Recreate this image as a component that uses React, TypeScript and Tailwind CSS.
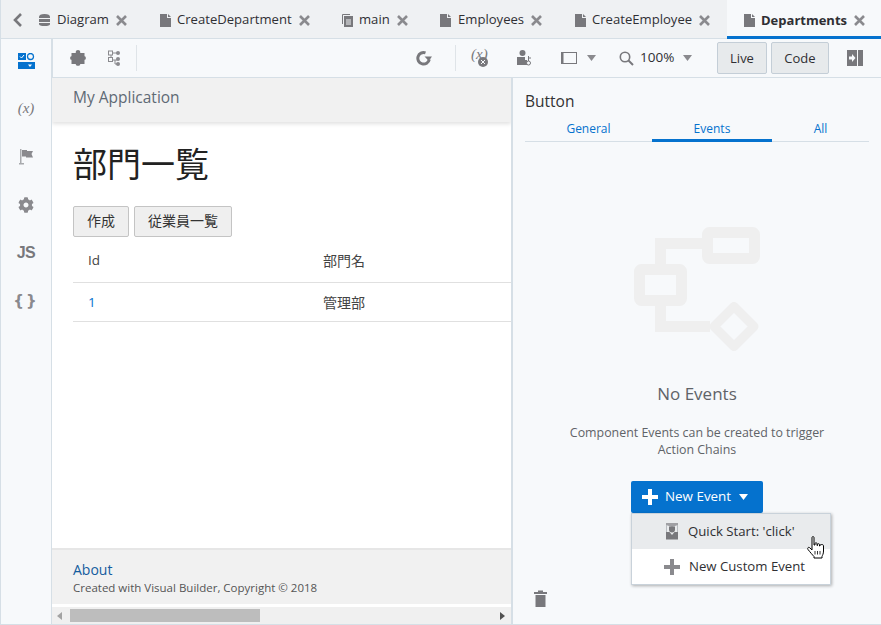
import React from "react";
import { FaCog } from "react-icons/fa";

const sans = "font-['Open_Sans','Noto_Sans','Noto_Sans_CJK_JP',sans-serif]";

function DocIcon() {
  return (
    <svg width="11" height="13" viewBox="0 0 11 13" className="shrink-0">
      <path d="M0 0H7V4H11V13H0Z" fill="#78787c" />
      <path d="M8 0L11 3H8Z" fill="#78787c" />
    </svg>
  );
}
function DbIcon() {
  return (
    <svg width="11" height="12" viewBox="0 0 11 12" className="shrink-0">
      <path d="M0 3Q0 0 5.500 0T11 3V4H0Z" fill="#78787c" />
      <rect y="5" width="11" height="3" fill="#78787c" />
      <path d="M0 9H11V10Q11 12 5.500 12T0 10Z" fill="#78787c" />
    </svg>
  );
}
function PagesIcon() {
  return (
    <svg width="11" height="13" viewBox="0 0 11 13" className="shrink-0">
      <path d="M0.500 10V0.500H8" fill="none" stroke="#78787c" />
      <rect x="2" y="2" width="9" height="11" fill="#78787c" />
      <path d="M4 6H9M4 8H9M4 10H9" stroke="#eff1f3" />
    </svg>
  );
}
function X() {
  return (
    <svg width="11" height="11" viewBox="0 0 11 11" className="ml-[7px] shrink-0">
      <path d="M1 1L10 10M10 1L1 10" stroke="#8a8a8e" strokeWidth="2.600" />
    </svg>
  );
}
function Caret({ color = "#8a8a8e" }: { color?: string }) {
  return (
    <svg width="9" height="6" viewBox="0 0 9 6" className="shrink-0">
      <path d="M0 0H9L4.500 6Z" fill={color} />
    </svg>
  );
}

function Tab({ icon, label, className, textClass = "ml-[6px]" }: { icon: React.ReactNode; label: string; className: string; textClass?: string }) {
  return (
    <div className={`flex items-center pt-[2px] ${className}`}>
      {icon}
      <span className={`text-[13.100px] leading-none text-[#2f2f33] whitespace-nowrap ${textClass}`}>{label}</span>
      <X />
    </div>
  );
}

function SideIcon({ children }: { children: React.ReactNode }) {
  return <div className="flex h-[24px] items-center justify-center">{children}</div>;
}

export default function App() {
  return (
    <div className={`flex h-[625px] w-[881px] flex-col overflow-hidden border-b border-l border-[#d6dfe6] bg-[#f7f9fb] ${sans}`}>
      {/* tab bar */}
      <div className="-ml-px flex h-[39px] shrink-0 items-stretch border-b border-[#d6dfe6] bg-[#eff1f3]">
        <div className="flex w-[39px] shrink-0 items-center pl-[12px] pt-[2px]">
          <svg width="11" height="14" viewBox="0 0 11 14">
            <path d="M9 1L3 7L9 13" fill="none" stroke="#78787c" strokeWidth="2.600" />
          </svg>
        </div>
        <Tab icon={<DbIcon />} label="Diagram" className="w-[121px]" textClass="ml-[7px]" />
        <Tab icon={<DocIcon />} label="CreateDepartment" className="w-[182px]" />
        <Tab icon={<PagesIcon />} label="main" className="w-[98px]" />
        <Tab icon={<DocIcon />} label="Employees" className="w-[135px]" textClass="ml-[7px]" />
        <Tab icon={<DocIcon />} label="CreateEmployee" className="w-[152px]" />
        <div className="-mb-px flex flex-1 items-center border-b-[3px] border-[#0572ce] bg-[#f7f9fb] pl-[17px] pt-[4px]">
          <DocIcon />
          <span className="ml-[6px] text-[13px] font-bold leading-none text-[#2f2f33] whitespace-nowrap">Departments</span>
          <X />
        </div>
      </div>

      <div className="flex min-h-0 flex-1">
        {/* sidebar */}
        <div className="flex w-[52px] shrink-0 flex-col items-center gap-[24px] border-r-2 border-[#d6dfe6] pt-[10px] mr-[-1px]">
          <SideIcon>
            <svg width="17" height="16" viewBox="0 0 17 16">
              <rect x="0" y="0" width="8" height="7" fill="#0572ce" />
              <path d="M2 3.500L3.500 5L6 2" fill="none" stroke="#fff" />
              <circle cx="12.500" cy="3.500" r="3" fill="none" stroke="#0572ce" strokeWidth="1.300" />
              <rect x="0" y="9" width="17" height="7" fill="#0572ce" />
              <path d="M10 11.500H14L12 14Z" fill="#fff" />
            </svg>
          </SideIcon>
          <SideIcon>
            <span className="-mt-[2px] font-['Liberation_Serif',serif] text-[15px] italic leading-none text-[#78787c]">(x)</span>
          </SideIcon>
          <SideIcon>
            <svg width="14" height="16" viewBox="0 0 14 16">
              <path d="M1 0H2.500V14H5V15.500H0V14H1Z" fill="#a8aaad" />
              <path d="M3 1H8V2H14L12.500 5L14 8.500H7V7.500H3Z" fill="#8a8a8e" />
            </svg>
          </SideIcon>
          <SideIcon>
            <FaCog size={16} color="#8a8a8e" />
          </SideIcon>
          <SideIcon>
            <span className="font-['Liberation_Sans',sans-serif] text-[16px] font-bold leading-none tracking-[-0.5px] text-[#78787c]">JS</span>
          </SideIcon>
          <SideIcon>
            <span className="font-['DejaVu_Sans',sans-serif] text-[15px] font-bold leading-none tracking-[2px] text-[#8a8a8e]">{"{}"}</span>
          </SideIcon>
        </div>

        <div className="flex min-w-0 flex-1 flex-col">
          {/* toolbar */}
          <div className="flex h-[39px] shrink-0 items-center border-b border-[#d6dfe6] pl-[18px]">
            <svg width="16" height="16" viewBox="0 0 16 16" className="shrink-0">
              <path d="M1.500 3H5.800C5.500 1 6.500 0 8 0S10.500 1 10.200 3H14.500V6.200C16.300 5.800 16.300 10.200 14.500 9.800V14H10.200C10.500 16.300 5.500 16.300 5.800 14H1.500V9.800C-0.300 10.200 -0.300 5.800 1.500 6.200Z" fill="#78787c" />
            </svg>
            <svg width="13" height="16" viewBox="0 0 13 16" className="ml-[22px] shrink-0">
              <rect x="0.500" y="1" width="4" height="4" fill="none" stroke="#8a8a8e" />
              <rect x="0.500" y="7.500" width="4" height="4" fill="none" stroke="#8a8a8e" />
              <circle cx="10" cy="3" r="2" fill="#8a8a8e" />
              <circle cx="10" cy="9" r="2" fill="#8a8a8e" />
              <circle cx="10" cy="14" r="2" fill="#8a8a8e" />
              <path d="M4 3H9M3 5V7M4 10H9M7 10V14H9" fill="none" stroke="#8a8a8e" />
            </svg>
            <div className="ml-[15px] h-[26px] w-px bg-[#dfe4e8]" />
            <svg width="16" height="16" viewBox="0 0 16 16" className="ml-[279px] shrink-0">
              <path d="M13.300 9.500A5.800 5.800 0 1 1 9.500 2.800" fill="none" stroke="#78787c" strokeWidth="3" />
              <path d="M8.500 6.500H16L12.800 11Z" fill="#78787c" />
            </svg>
            <div className="ml-[23px] h-[26px] w-px bg-[#dfe4e8]" />
            <div className="relative ml-[15px] h-[18px] w-[17px] shrink-0">
              <span className="absolute left-0 top-[-2px] font-['Liberation_Serif',serif] text-[15px] italic leading-[15px] text-[#78787c]">(x)</span>
              <svg width="10" height="10" viewBox="0 0 10 10" className="absolute bottom-0 right-0">
                <circle cx="5" cy="5" r="5" fill="#78787c" />
                <path d="M3 3L7 7M7 3L3 7" stroke="#f7f9fb" />
              </svg>
            </div>
            <svg width="15" height="16" viewBox="0 0 15 16" className="ml-[29px] shrink-0">
              <circle cx="5.500" cy="3" r="3" fill="#78787c" />
              <path d="M0 7H8V10H10V15H0Z" fill="#78787c" />
              <circle cx="11.500" cy="13" r="2" fill="#f7f9fb" stroke="#78787c" />
              <path d="M11.500 11V6M11.500 8H14" stroke="#78787c" />
            </svg>
            <svg width="16" height="12" viewBox="0 0 16 12" className="ml-[29px] shrink-0">
              <rect x="0.500" y="0.500" width="15" height="11" fill="none" stroke="#78787c" />
              <rect x="0.500" y="0.500" width="2" height="11" fill="#78787c" />
            </svg>
            <div className="ml-[10px]"><Caret /></div>
            <svg width="15" height="15" viewBox="0 0 15 15" className="ml-[23px] shrink-0">
              <circle cx="6" cy="6" r="4.700" fill="none" stroke="#78787c" strokeWidth="1.600" />
              <path d="M9.500 9.500L14 14" stroke="#78787c" strokeWidth="2" />
            </svg>
            <span className="ml-[6px] w-[43px] text-[13.500px] leading-none text-[#2f2f33]">100%</span>
            <Caret />
            <button className="ml-[25px] h-[32px] w-[50px] shrink-0 rounded-[2px] border border-[#c4ced7] bg-[#e7eaec] text-center text-[13px] leading-none text-[#2f2f33]">Live</button>
            <button className="ml-[4px] h-[32px] w-[58px] shrink-0 rounded-[2px] border border-[#c4ced7] bg-[#e7eaec] text-center text-[13px] leading-none text-[#2f2f33]">Code</button>
            <svg width="16" height="16" viewBox="0 0 16 16" className="ml-[18px] shrink-0">
              <rect x="0" y="0" width="10" height="16" fill="#78787c" />
              <rect x="11" y="0" width="5" height="16" fill="#78787c" />
              <path d="M2 6.500H5V4L8.500 8L5 12V9.500H2Z" fill="#f7f9fb" />
            </svg>
          </div>

          {/* body */}
          <div className="flex min-h-0 flex-1">
            {/* canvas */}
            <div className="flex w-[459px] shrink-0 flex-col overflow-hidden bg-white">
              <div className="flex h-[44px] shrink-0 items-center bg-[#f1f1f1] pb-[4px] pl-[21px] text-[15.500px] leading-none text-[#5f6a75] shadow-[0_2px_4px_rgba(0,0,0,0.12)]">My Application</div>
              <div className="flex min-h-0 flex-1 flex-col pl-[21px]">
                <h1 className="mt-[17px] h-[48px] text-[34px] font-normal leading-[48px] text-[#222] font-['Noto_Sans_CJK_JP',sans-serif]">部門一覧</h1>
                <div className="mt-[19px] flex gap-[5px]">
                  <button className="flex h-[31px] w-[56px] items-center justify-center rounded-[2px] border border-[#c4c4c4] bg-[#efefef] pb-[3px] text-[14px] leading-none text-[#333] font-['Noto_Sans_CJK_JP',sans-serif]">作成</button>
                  <button className="flex h-[31px] w-[98px] items-center justify-center rounded-[2px] border border-[#c4c4c4] bg-[#efefef] pb-[3px] text-[14px] leading-none text-[#333] font-['Noto_Sans_CJK_JP',sans-serif]">従業員一覧</button>
                </div>
                <div className="flex h-[46px] items-center border-b border-[#e0e0e0] text-[13.500px] leading-none text-[#444]">
                  <span className="w-[250px] pl-[15px] pt-[2px]">Id</span>
                  <span className="text-[14px] font-['Noto_Sans_CJK_JP',sans-serif]">部門名</span>
                </div>
                <div className="flex h-[39px] items-center border-b border-[#e0e0e0] text-[13.500px] leading-none">
                  <span className="w-[250px] pl-[15px] pt-[1px] text-[#0572ce]">1</span>
                  <span className="text-[14px] text-[#444] font-['Noto_Sans_CJK_JP',sans-serif]">管理部</span>
                </div>
              </div>
              <div className="flex h-[56px] shrink-0 flex-col border-t-2 border-[#e6e6e6] bg-[#f1f1f1] pl-[21px] pt-[11px]">
                <a className="text-[14px] leading-[18px] text-[#145c9e]">About</a>
                <span className="mt-[1px] text-[11.500px] leading-[15px] text-[#555]">Created with Visual Builder, Copyright © 2018</span>
              </div>
              <div className="mt-[3px] flex h-[17px] shrink-0 items-center bg-[#f0f0f0] pl-[5px]">
                <svg width="5" height="8" viewBox="0 0 5 8" className="shrink-0"><path d="M5 0V8L0 4Z" fill="#a3a3a3" /></svg>
                <div className="ml-[8px] h-[13px] w-[190px] bg-[#bdbdbd]" />
                <svg width="5" height="8" viewBox="0 0 5 8" className="ml-[240px] shrink-0"><path d="M0 0V8L5 4Z" fill="#505050" /></svg>
              </div>
            </div>

            {/* inspector */}
            <div className="relative flex min-w-0 flex-1 flex-col border-l-2 border-[#d6dfe6] px-[12px]">
              <div className="mt-[14px] text-[15.500px] font-normal leading-[18px] text-[#333]">Button</div>
              <div className="mt-[10px] flex h-[22px] items-stretch border-b border-[#d6dfe6] text-[12px] leading-none text-[#0572ce]">
                <div className="flex w-[127px] justify-center pt-[3px]">General</div>
                <div className="-mb-px flex w-[120px] justify-center border-b-[3px] border-[#0572ce] pt-[3px]">Events</div>
                <div className="flex w-[97px] justify-center pt-[3px]">All</div>
              </div>
              <div className="flex flex-col items-center">
                <svg width="126" height="126" viewBox="0 0 126 126" className="mt-[85px] shrink-0">
                  <g fill="none" stroke="#efefef" strokeWidth="11">
                    <rect x="73.500" y="5.500" width="47" height="26" rx="2" />
                    <rect x="5.500" y="42.500" width="42" height="31" rx="2" />
                    <path d="M26.500 37V16.500H68M26.500 79V99.500H76" />
                  </g>
                  <path d="M100 79.500L120 99.500L100 119.500L80 99.500Z" fill="none" stroke="#efefef" strokeWidth="9" strokeLinejoin="round" />
                </svg>
                <div className="mt-[29px] text-[17px] leading-[24px] text-[#5f6368]">No Events</div>
                <div className="mt-[18px] text-center text-[12.400px] leading-[17px] text-[#5f6368]">
                  Component Events can be created to trigger
                  <br />
                  Action Chains
                </div>
                <button className="mt-[23px] flex h-[32px] w-[132px] items-center rounded-[2px] bg-[#0572ce] pl-[11px] text-[13.400px] leading-none text-white">
                  <svg width="16" height="16" viewBox="0 0 16 16" className="shrink-0">
                    <path d="M6 0H10V6H16V10H10V16H6V10H0V6H6Z" fill="#fff" />
                  </svg>
                  <span className="ml-[7px]">New Event</span>
                  <span className="ml-[8px]"><Caret color="#fff" /></span>
                </button>
              </div>
              {/* trash */}
              <svg width="13" height="17" viewBox="0 0 13 17" className="absolute bottom-[17px] left-[21px]">
                <path d="M4 2V0.500H9V2H13V4H0V2Z" fill="#78787c" />
                <path d="M1.500 5H11.500V17H1.500Z" fill="#78787c" />
              </svg>
              {/* menu */}
              <div className="absolute left-[118px] top-[435px] flex w-[200px] flex-col border border-[#c9d2da] bg-white shadow-[1px_1px_3px_rgba(0,0,0,0.3)]">
                <div className="flex h-[35px] items-center bg-[#e9ebed] pl-[34px] text-[13.200px] leading-none text-[#2f2f33]">
                  <svg width="12" height="17" viewBox="0 0 12 17" className="shrink-0">
                    <path d="M0 0H12V2L6 4L0 2Z" fill="#a0a0a4" />
                    <path d="M3 3.500H9V6.500A3 3 0 0 1 3 6.500Z" fill="#78787c" />
                    <path d="M0 9H3.500L6 12L8.500 9H12V16.500H0Z" fill="#78787c" />
                    <path d="M0.500 2V9M11.500 2V9" stroke="#b8bcc0" />
                  </svg>
                  <span className="ml-[10px]">Quick Start: 'click'</span>
                </div>
                <div className="flex h-[35px] items-center pl-[32px] text-[13.200px] leading-none text-[#2f2f33]">
                  <svg width="16" height="16" viewBox="0 0 16 16" className="shrink-0">
                    <path d="M6 0H10V6H16V10H10V16H6V10H0V6H6Z" fill="#8a8a8e" />
                  </svg>
                  <span className="ml-[9px]">New Custom Event</span>
                </div>
              </div>
              {/* hand cursor */}
              <svg width="18" height="23" viewBox="0 0 18 23" className="absolute left-[294px] top-[458px]">
                <path d="M5 1.500C5 0.300 7 0.300 7 1.500V9L8 9V7.500C8 6.500 10 6.500 10 7.500V9.500H10.500V8.500C10.500 7.500 12.500 7.500 12.500 8.500V10H13V9.300C13 8.300 16.500 8.300 16.500 9.500V15C16.500 18 15.500 19 15 20.500V22H7V20.500C5.500 19 3 16 1 13.500C0 12 1.500 10.500 3 12L5 14Z" fill="#fff" stroke="#000" strokeWidth="1" strokeLinejoin="round" />
                <path d="M8 15V18.500M10.500 15V18.500M13 15V18.500" stroke="#000" strokeWidth="0.800" />
              </svg>
            </div>
          </div>
        </div>
      </div>
    </div>
  );
}
